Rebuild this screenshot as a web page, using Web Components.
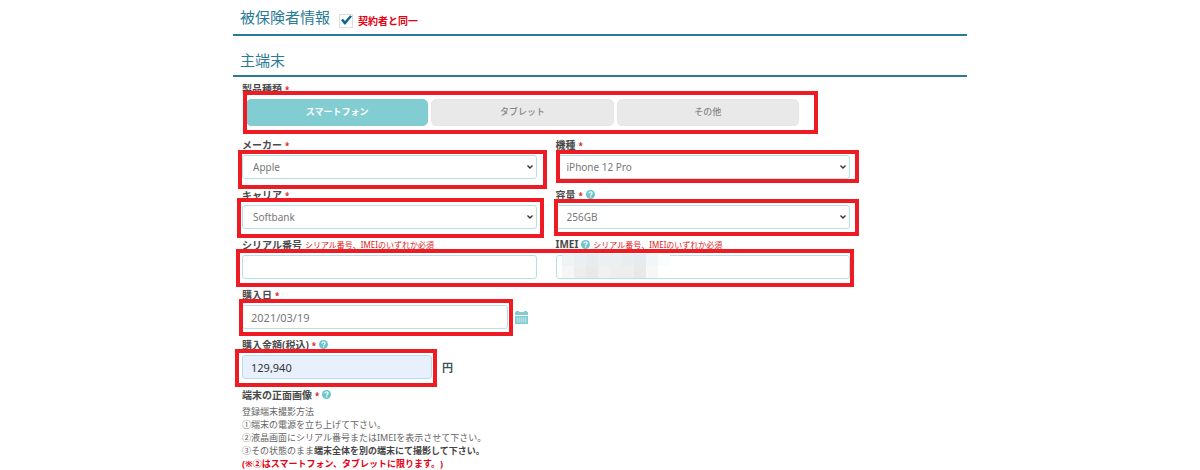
<!DOCTYPE html>
<html lang="ja">
<head>
<meta charset="utf-8">
<meta name="viewport" content="width=device-width, initial-scale=1">
<title>被保険者情報</title>
<style>
  body {
    margin: 0;
    background: #fff;
    color: #555;
    font-family: "Noto Sans", "Noto Sans CJK JP", sans-serif;
    font-size: 10px;
    text-spacing-trim: space-all;
    --teal: #82cdd2;
    --line: #b4e1e6;
    --heading: #2b7a96;
    --danger: #e02020;
    --mark: #ed1c24;
  }
</style>
</head>
<body>
<insurance-form></insurance-form>

<script>
  // every element clones its markup into an open shadow root
  class BaseElement extends HTMLElement {
    constructor () {
      super();
      this.attachShadow({mode: 'open'});
    }

    connectedCallback () {
      const template = document.createElement('template');
      template.innerHTML = this.render();
      this.shadowRoot.replaceChildren(template.content.cloneNode(true));
    }

    attr (name) {
      return this.getAttribute(name) || '';
    }
  }

  class SectionTitle extends BaseElement {
    render () {
      return `
        <style>
          :host {
            display: flex;
            align-items: center;
            gap: 9px;
            padding: 0 7px;
            border-bottom: 2px solid var(--heading);
          }
          h2 {
            margin: 0;
            color: var(--heading);
            font-size: 15px;
            font-weight: 400;
            line-height: 30px;
          }
        </style>
        <h2><slot></slot></h2>
        <slot name="extra"></slot>
      `;
    }
  }

  class CheckOption extends BaseElement {
    render () {
      return `
        <style>
          :host { display: block; padding-top: 8px; }
          label {
            display: flex;
            align-items: center;
            gap: 5px;
            color: #e60012;
            font-weight: 700;
            line-height: 14px;
          }
          input {
            appearance: none;
            box-sizing: border-box;
            width: 14px;
            height: 14px;
            margin: 0;
            border: 1px solid #ddd;
            background: #fff;
          }
          input:checked::before {
            content: "";
            display: block;
            width: 12px;
            height: 10px;
            background: #12698f;
            clip-path: polygon(8% 52%, 24% 38%, 42% 60%, 84% 2%, 100% 14%, 46% 96%, 36% 96%);
          }
        </style>
        <label><input type="checkbox" checked><slot></slot></label>
      `;
    }
  }

  class HelpIcon extends BaseElement {
    render () {
      return `
        <style>
          :host { display: inline-flex; }
          svg { width: 9px; height: 9px; }
        </style>
        <svg viewBox="0 0 18 18" aria-hidden="true">
          <circle cx="9" cy="9" r="9" fill="#6cc5cc"/>
          <path d="M5.8 7c0-4 6.4-4 6.4-.4 0 2.2-3 2.2-3 4.4" fill="none" stroke="#fff" stroke-width="2.4"/>
          <path d="M7.8 12.4h2.6v2.4H7.8z" fill="#fff"/>
        </svg>
      `;
    }
  }

  // red frame round whatever is slotted; --mark-inset moves its edges
  class MarkFrame extends BaseElement {
    render () {
      return `
        <style>
          :host { display: block; position: relative; }
          :host::after {
            content: "";
            position: absolute;
            z-index: 1;
            inset: var(--mark-inset, -5px);
            border: 4px solid var(--mark);
            pointer-events: none;
          }
        </style>
        <slot></slot>
      `;
    }
  }

  const headStyles = `
    .head {
      box-sizing: border-box;
      display: flex;
      align-items: center;
      gap: 3px;
      height: 20px;
      padding-bottom: 2px;
      white-space: nowrap;
    }
    label, .label { color: #4a4a4a; font-weight: 700; }
    .required { padding-top: 4px; color: var(--danger); font-size: 8px; font-weight: 700; line-height: 10px; }
    .note { color: var(--danger); font-size: 8px; }
  `;

  const fieldStyles = `
    ${headStyles}
    :host { display: block; }
    .row { display: flex; align-items: center; gap: 7px; }
    mark-frame { flex: 1; min-width: 0; }
    input, select {
      box-sizing: border-box;
      display: block;
      width: 100%;
      height: 24px;
      margin: 0;
      padding: 0 8px;
      border: 1px solid var(--line);
      border-radius: 3px;
      background: #fff;
      color: #777;
      font: inherit;
    }
  `;

  class FieldElement extends BaseElement {
    head (tag = 'label') {
      const text = tag === 'label'
        ? `<label for="control">${this.attr('label')}</label>`
        : `<span class="label" id="label">${this.attr('label')}</span>`;
      return `
        <div class="head">
          ${text}
          ${this.hasAttribute('required') ? '<span class="required">*</span>' : ''}
          ${this.hasAttribute('help') ? '<help-icon></help-icon>' : ''}
          ${this.hasAttribute('note') ? `<span class="note">${this.attr('note')}</span>` : ''}
        </div>
      `;
    }

    frame (content) {
      return this.hasAttribute('marked') ? `<mark-frame>${content}</mark-frame>` : content;
    }
  }

  class TextField extends FieldElement {
    render () {
      return `
        <style>
          ${fieldStyles}
          input { font-size: 11px; }
          :host([filled]) input { background: #e8f0fe; color: #333; }
        </style>
        ${this.head()}
        <div class="row">
          ${this.frame(`<input id="control" type="text" value="${this.attr('value')}">`)}
          <slot name="after"></slot>
        </div>
      `;
    }
  }

  class SelectField extends FieldElement {
    render () {
      return `
        <style>
          ${fieldStyles}
          .control { display: grid; align-items: center; }
          .control > * { grid-area: 1 / 1; }
          select { appearance: none; padding: 0 10px; }
          svg {
            justify-self: end;
            width: 6px;
            height: 4px;
            margin-right: 4px;
            pointer-events: none;
          }
        </style>
        ${this.head()}
        ${this.frame(`
          <div class="control">
            <select id="control"><option>${this.attr('value')}</option></select>
            <svg viewBox="0 0 6 4" aria-hidden="true"><path d="M.5.5 3 3 5.5.5" fill="none" stroke="#333" stroke-width="1.4"/></svg>
          </div>
        `)}
      `;
    }
  }

  class TypePicker extends FieldElement {
    render () {
      const buttons = this.attr('options').split(',').map((name, index) =>
        `<button type="button" aria-pressed="${index === 0}">${name}</button>`
      ).join('');
      return `
        <style>
          ${fieldStyles}
          .buttons {
            display: grid;
            grid-template-columns: repeat(3, 1fr);
            gap: 3px;
            margin: 0 51px 0 4px;
          }
          button {
            height: 27px;
            padding: 0 0 2px;
            border: 1px solid #e6e6e6;
            border-radius: 5px;
            background: #e9e9e9;
            color: #888;
            font: inherit;
            font-size: 9px;
            font-weight: 500;
          }
          button[aria-pressed="true"] {
            border-color: var(--teal);
            background: var(--teal);
            color: #fff;
            font-weight: 700;
          }
        </style>
        ${this.head('span')}
        ${this.frame(`<div class="buttons" role="group" aria-labelledby="label">${buttons}</div>`)}
      `;
    }

    connectedCallback () {
      super.connectedCallback();
      const buttons = this.shadowRoot.querySelectorAll('button');
      buttons.forEach((button) => {
        button.addEventListener('click', () => {
          buttons.forEach((other) => other.setAttribute('aria-pressed', other === button));
        });
      });
    }
  }

  class CalendarButton extends BaseElement {
    render () {
      return `
        <style>
          :host { display: block; }
          button { display: block; padding: 0; border: 0; background: none; }
          svg { display: block; width: 13px; height: 13px; }
        </style>
        <button type="button" aria-label="カレンダー">
          <svg viewBox="0 0 13 13">
            <path d="M0 1h1V0h3v1h5V0h3v1h1v3H0zM0 5h13v8H0z" fill="#82cdd2"/>
            <path d="M2.5 6v6M4.5 6v6M6.5 6v6M8.5 6v6M10.5 6v6M1 8h11M1 10h11" stroke="#fff" stroke-opacity=".6" stroke-width=".5"/>
          </svg>
        </button>
      `;
    }
  }

  // coarse tiles that hide a private value
  class PixelMask extends BaseElement {
    render () {
      const rows = [
        ['#eef3f4', '#eaf0f1', '#e7edef', '#ebf0f1', '#ebf0f1', '#e8eeef', '#e6ecee', '#f1f7f8', '#f8fdfe'],
        ['#f6f6f7', '#ededee', '#e9e9ea', '#f1f1f1', '#eeeeef', '#eeeeee', '#e9e9ea', '#f7f7f8', 'transparent']
      ];
      return `
        <style>
          :host { display: grid; grid-template-columns: repeat(9, 12px); grid-auto-rows: 12px; }
        </style>
        ${rows.flat().map((color) => `<i style="background: ${color}"></i>`).join('')}
      `;
    }
  }

  class InsuranceForm extends BaseElement {
    render () {
      return `
        <style>
          ${headStyles}
          :host { display: block; max-width: 734px; margin: 0 auto; }
          section-title { padding-top: 2px; padding-bottom: 2px; }
          section-title + section-title { padding-top: 9px; padding-bottom: 0; }
          form { max-width: 608px; padding: 2px 0 0 9px; }
          .fields {
            display: grid;
            grid-template-columns: 1fr 1fr;
            gap: 6px 19px;
            margin-top: 9px;
          }
          .wide { grid-column: 1 / -1; }
          .pair {
            display: grid;
            grid-template-columns: 1fr 1fr;
            gap: 19px;
            --mark-inset: 14px -4px -8px -6px;
          }
          .date { max-width: 286px; }
          .price { max-width: 211px; }
          .imei { position: relative; }
          pixel-mask { position: absolute; left: 6px; top: 19px; }
          .yen { padding-left: 3px; color: #3b5260; font-size: 11px; font-weight: 700; }
          .guide { margin: 0; color: #666; font-size: 9px; line-height: 13px; }
          .guide strong { color: #444; }
          .guide .limit { color: #e60012; }
        </style>
        <section-title>被保険者情報
          <check-option slot="extra">契約者と同一</check-option>
        </section-title>
        <section-title>主端末</section-title>
        <form>
          <type-picker label="製品種類" required marked options="スマートフォン,タブレット,その他"
            style="--mark-inset: -8px 32px -8px 1px"></type-picker>
          <div class="fields">
            <select-field label="メーカー" required marked value="Apple"
              style="--mark-inset: -5px -10px -10px -4px"></select-field>
            <select-field label="機種" required marked value="iPhone 12 Pro"
              style="--mark-inset: -5px -9px -4px 0"></select-field>
            <select-field label="キャリア" required marked value="Softbank"
              style="--mark-inset: -7px -7px -9px -5px"></select-field>
            <select-field label="容量" required help marked value="256GB"
              style="--mark-inset: -6px -9px -7px -2px"></select-field>
            <mark-frame class="pair wide">
              <text-field label="シリアル番号" note="シリアル番号、IMEIのいずれか必須"></text-field>
              <div class="imei">
                <text-field label="IMEI" help note="シリアル番号、IMEIのいずれか必須"></text-field>
                <pixel-mask></pixel-mask>
              </div>
            </mark-frame>
            <text-field class="date wide" label="購入日" required marked value="2021/03/19"
              style="--mark-inset: -6px -5px -7px -3px">
              <calendar-button slot="after"></calendar-button>
            </text-field>
            <text-field class="price wide" label="購入金額(税込)" required help marked filled value="129,940"
              style="--mark-inset: -6px -5px -8px -7px">
              <span class="yen" slot="after">円</span>
            </text-field>
            <div class="wide">
              <div class="head">
                <span class="label">端末の正面画像</span><span class="required">*</span><help-icon></help-icon>
              </div>
              <p class="guide">
                登録端末撮影方法<br>
                ①端末の電源を立ち上げて下さい。<br>
                ②液晶画面にシリアル番号またはIMEIを表示させて下さい。<br>
                ③その状態のまま<strong>端末全体を別の端末にて撮影して下さい。</strong><br>
                <strong class="limit">(※②はスマートフォン、タブレットに限ります。)</strong>
              </p>
            </div>
          </div>
        </form>
      `;
    }
  }

  customElements.define('section-title', SectionTitle);
  customElements.define('check-option', CheckOption);
  customElements.define('help-icon', HelpIcon);
  customElements.define('mark-frame', MarkFrame);
  customElements.define('text-field', TextField);
  customElements.define('select-field', SelectField);
  customElements.define('type-picker', TypePicker);
  customElements.define('calendar-button', CalendarButton);
  customElements.define('pixel-mask', PixelMask);
  customElements.define('insurance-form', InsuranceForm);
</script>
</body>
</html>
